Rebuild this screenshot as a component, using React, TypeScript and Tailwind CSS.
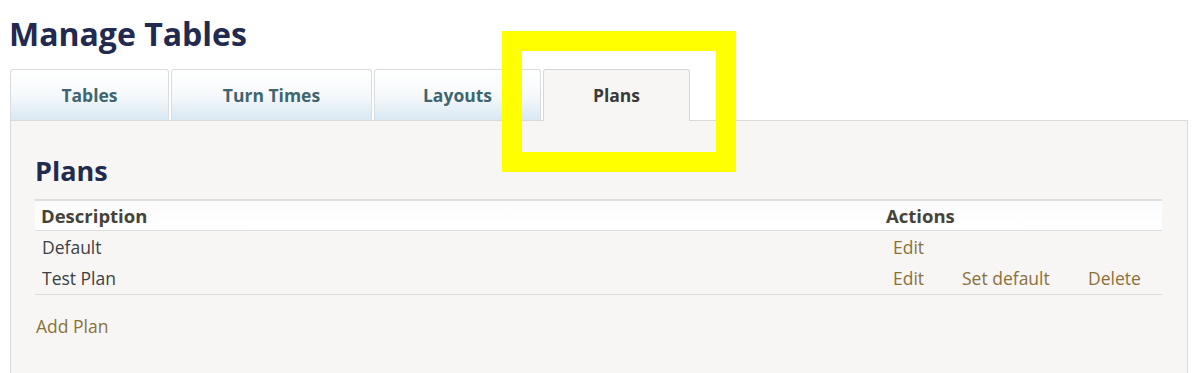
import React from 'react'

const tabs = [
  { label: 'Tables',     width: 'w-[159px]' },
  { label: 'Turn Times', width: 'w-[201px]' },
  { label: 'Layouts',    width: 'w-[167px]' },
  { label: 'Plans',      width: 'w-[147px]', active: true },
]

const plans = [
  { name: 'Default',   actions: ['Edit'] },
  { name: 'Test Plan', actions: ['Edit', 'Set default', 'Delete'] },
]

const actionWidth: Record<string, string> = {
  'Edit':        'w-[69px]',
  'Set default': 'w-[126px]',
  'Delete':      'w-[60px]',
}

export default function App() {
  return (
    <div className="relative w-[1195px] h-[373px] overflow-hidden bg-white font-['Open_Sans',sans-serif]">
      <h1 className="pl-[9px] pt-[15px] text-[32px] leading-[38px] font-bold text-[#232a4f]">
        Manage Tables
      </h1>

      {/* tab strip */}
      <div className="mt-[15px] pl-[10px] flex items-end gap-[2px] h-[52px]">
        {tabs.map(t =>
          t.active ? (
            <div
              key={t.label}
              className={`${t.width} relative z-10 -mb-px h-[52px] flex items-center justify-center rounded-t-[3px] border border-b-0 border-[#d6d6d6] bg-[#f7f6f4] text-[17.5px] font-bold text-[#3b3a3a]`}
            >
              {t.label}
            </div>
          ) : (
            <div
              key={t.label}
              className={`${t.width} h-[51px] flex items-center justify-center rounded-t-[3px] border border-b-0 border-[#d9dcdf] bg-gradient-to-b from-white via-[#f6f9fb] to-[#d9e8f2] text-[17.5px] font-bold text-[#3f6670]`}
            >
              {t.label}
            </div>
          )
        )}
      </div>

      {/* panel */}
      <div className="ml-[10px] w-[1178px] h-[260px] border border-b-0 border-[#dadada] bg-[#f7f6f4] pl-[24px] pr-[24px]">
        <h2 className="pt-[33px] text-[27px] leading-[34px] font-bold text-[#232a4f]">Plans</h2>

        <div className="mt-[11px] w-[1127px]">
          <div className="flex h-[32px] items-center border-t-2 border-b border-[#dedede] bg-gradient-to-b from-[#fbfbfb] to-white text-[18.5px] font-bold text-[#46433a]">
            <div className="w-[847px] pl-[6px]">Description</div>
            <div className="pl-[4px]">Actions</div>
          </div>
          {plans.map((p, i) => (
            <div
              key={p.name}
              className={`flex h-[32px] items-center text-[17.5px] ${i === plans.length - 1 ? 'border-b border-[#dcdcdc]' : ''}`}
            >
              <div className="w-[847px] pl-[7px] text-[#3c4146]">{p.name}</div>
              <div className="flex pl-[11px] text-[#8c7039]">
                {p.actions.map(a => (
                  <span key={a} className={actionWidth[a]}>{a}</span>
                ))}
              </div>
            </div>
          ))}
        </div>

        <div className="mt-[18px] pl-[1px] text-[17.5px] text-[#8c7039]">Add Plan</div>
      </div>

      {/* yellow highlight annotation */}
      <div className="absolute left-[502px] top-[31px] w-[234px] h-[141px] border-[20px] border-[#ffff00]" />
    </div>
  )
}
